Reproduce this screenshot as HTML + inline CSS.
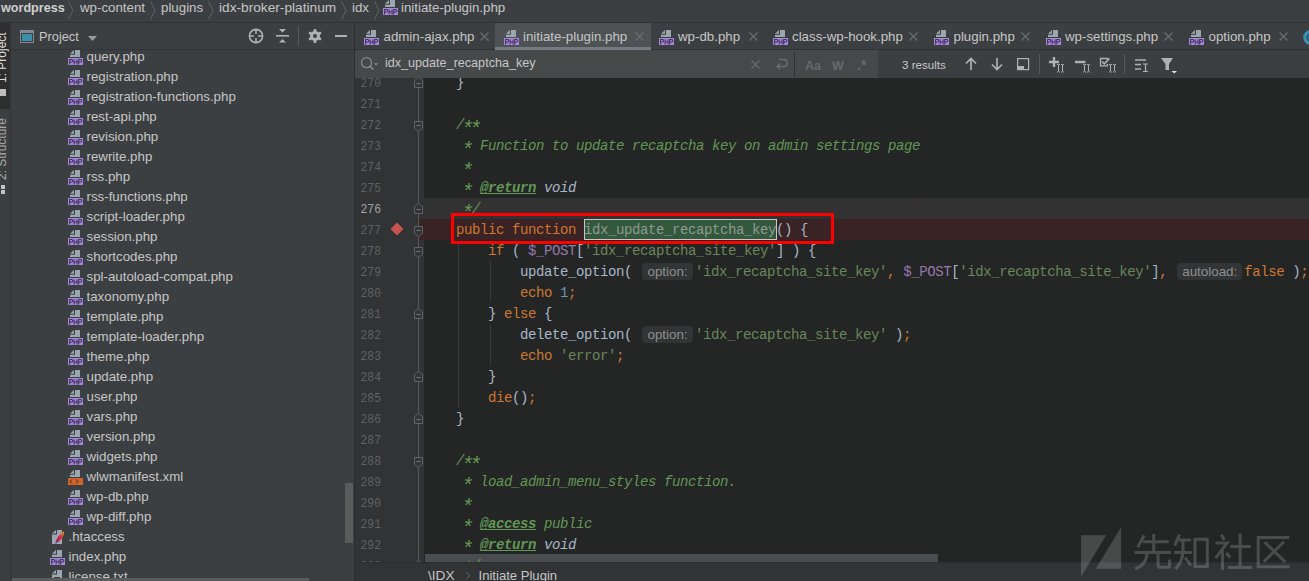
<!DOCTYPE html>
<html><head><meta charset="utf-8">
<style>
*{margin:0;padding:0;box-sizing:border-box}
html,body{width:1309px;height:581px;overflow:hidden;background:#3c3f41}
body{position:relative;font-family:"Liberation Sans",sans-serif}
.a{position:absolute;white-space:pre}
svg{position:absolute;overflow:visible}
.cl{position:absolute;left:0;white-space:pre;font-family:"Liberation Mono",monospace;font-size:14px;letter-spacing:-0.4px;line-height:21px;color:#a9b7c6}
.k{color:#cc7832}.s{color:#6a8759}.n{color:#6897bb}.v{color:#9876aa}.c{color:#629755;font-style:italic}
.tg{font-weight:bold;text-decoration:underline;text-decoration-skip-ink:none}
.ast{display:inline-block;width:8px;text-align:center;transform:translate(-1px,4.5px) scale(1.45)}
.vd{color:#a9b7c6;font-style:italic}
.hl{color:#909a90}
.hint{display:inline-block;position:relative;height:21px;vertical-align:top;font-family:"Liberation Sans",sans-serif;font-size:13.4px;letter-spacing:0px;color:#8f8f8f;line-height:21px;text-align:center}
.hb{position:absolute;left:2px;right:2px;top:1px;bottom:3px;background:#323435;border-radius:4px}
.ht{position:relative;top:-1px}
</style></head><body>
<div class="a" style="left:0px;top:0px;width:1309px;height:581px;background:#3c3f41;"></div>
<div class="a" style="left:0px;top:0px;width:1309px;height:22px;background:#3c3f41;"></div>
<div class="a" style="left:0px;top:22px;width:1309px;height:1px;background:#2f3133;"></div>
<div class="a" style="left:0px;top:23px;width:10px;height:86px;background:#2c2e30;"></div>
<div class="a" style="left:10px;top:23px;width:1px;height:558px;background:#323436;"></div>
<div class="a" style="left:11px;top:49px;width:343px;height:1px;background:#323436;"></div>
<div class="a" style="left:354px;top:23px;width:1px;height:558px;background:#2b2d2e;"></div>
<div class="a" style="left:1px;top:-1.87px;line-height:20px;font-size:12.6px;color:#cfcfcf;font-family:'Liberation Sans',sans-serif;font-weight:bold">wordpress</div>
<svg style="left:68px;top:1px" width="6" height="19"><path d="M0.5 0.5 L5 9.5 L0.5 18.5" fill="none" stroke="#5d6062" stroke-width="1"/></svg>
<div class="a" style="left:80px;top:-2.11px;line-height:20px;font-size:13.3px;color:#c6c6c6;font-family:'Liberation Sans',sans-serif;">wp-content</div>
<svg style="left:150px;top:1px" width="6" height="19"><path d="M0.5 0.5 L5 9.5 L0.5 18.5" fill="none" stroke="#5d6062" stroke-width="1"/></svg>
<div class="a" style="left:161px;top:-2.11px;line-height:20px;font-size:13.3px;color:#c6c6c6;font-family:'Liberation Sans',sans-serif;">plugins</div>
<svg style="left:208px;top:1px" width="6" height="19"><path d="M0.5 0.5 L5 9.5 L0.5 18.5" fill="none" stroke="#5d6062" stroke-width="1"/></svg>
<div class="a" style="left:219px;top:-2.25px;line-height:20px;font-size:13.7px;color:#c6c6c6;font-family:'Liberation Sans',sans-serif;">idx-broker-platinum</div>
<svg style="left:341px;top:1px" width="6" height="19"><path d="M0.5 0.5 L5 9.5 L0.5 18.5" fill="none" stroke="#5d6062" stroke-width="1"/></svg>
<div class="a" style="left:352px;top:-2.11px;line-height:20px;font-size:13.3px;color:#c6c6c6;font-family:'Liberation Sans',sans-serif;">idx</div>
<svg style="left:374px;top:1px" width="6" height="19"><path d="M0.5 0.5 L5 9.5 L0.5 18.5" fill="none" stroke="#5d6062" stroke-width="1"/></svg>
<svg style="left:383px;top:0px" width="15" height="15" viewBox="0 0 15 15">
<path d="M7 0 H12 V7 H2 V4.7 H7 Z" fill="#9aa7b0"/>
<path d="M2 3.7 L6 0 V3.7 Z" fill="#9aa7b0"/>
<rect x="0" y="8" width="15" height="7" fill="#a686d8"/>
<path d="M1.6 14.6 V9.4 H3.7 Q4.7 9.4 4.7 10.7 Q4.7 12 3.7 12 H1.6" fill="none" stroke="#40345a" stroke-width="1.05"/>
<path d="M6.1 9.4 V14.6 M9.1 9.4 V14.6 M6.1 12 H9.1" fill="none" stroke="#40345a" stroke-width="1.05"/>
<path d="M10.7 14.6 V9.4 H12.8 Q13.8 9.4 13.8 10.7 Q13.8 12 12.8 12 H10.7" fill="none" stroke="#40345a" stroke-width="1.05"/>
</svg>
<div class="a" style="left:401px;top:-2.11px;line-height:20px;font-size:13.3px;color:#c6c6c6;font-family:'Liberation Sans',sans-serif;">initiate-plugin.php</div>
<div class="a" style="left:-5px;top:31px;width:20px;height:52px;"><div style="position:absolute;left:0;top:0;width:52px;height:14px;transform-origin:0 0;transform:translate(0px,52px) rotate(-90deg);font-size:12px;line-height:14px;color:#dddddd;white-space:pre">1: Project</div></div>
<div class="a" style="left:0px;top:89px;width:6px;height:7px;background:#bdbdbd;"></div>
<div class="a" style="left:-5px;top:118px;width:20px;height:62px;"><div style="position:absolute;left:0;top:0;width:62px;height:14px;transform-origin:0 0;transform:translate(0px,62px) rotate(-90deg);font-size:12px;line-height:14px;color:#a8a8a8;white-space:pre">2: Structure</div></div>
<div class="a" style="left:1px;top:185px;width:4px;height:4px;background:#c4c4c4;"></div>
<div class="a" style="left:1px;top:190px;width:4px;height:4px;background:#c4c4c4;"></div>
<svg style="left:20px;top:30px" width="14" height="13"><rect x="0.5" y="0.5" width="13" height="12" fill="none" stroke="#7f8b91"/><rect x="0" y="0" width="14" height="3" fill="#7f8b91"/><rect x="2" y="4" width="10" height="7" fill="#3d8ead"/></svg>
<div class="a" style="left:39px;top:26.56px;line-height:20px;font-size:12.8px;color:#c6c6c6;font-family:'Liberation Sans',sans-serif;">Project</div>
<svg style="left:88px;top:35.5px" width="9" height="5"><path d="M0 0 H9 L4.5 5 Z" fill="#9a9c9e"/></svg>
<svg style="left:248px;top:28px" width="16" height="16"><circle cx="8" cy="8" r="6.6" fill="none" stroke="#afb1b3" stroke-width="1.6"/><path d="M8 1 V6 M8 10 V15 M1 8 H6 M10 8 H15" stroke="#afb1b3" stroke-width="1.6"/></svg>
<svg style="left:276px;top:29px" width="13" height="14"><path d="M3 0 H10 L6.5 3.5 Z M3 13.5 H10 L6.5 10 Z" fill="#afb1b3"/><rect x="0" y="6" width="13" height="1.6" fill="#afb1b3"/></svg>
<div class="a" style="left:298px;top:26px;width:1px;height:20px;background:#55585a;"></div>
<svg style="left:308px;top:29px" width="14" height="14" viewBox="0 0 14 14"><g fill="#afb1b3">
<circle cx="7" cy="7" r="5"/>
<rect x="5.6" y="0" width="2.8" height="14" rx="0.8"/>
<rect x="5.6" y="0" width="2.8" height="14" rx="0.8" transform="rotate(60 7 7)"/>
<rect x="5.6" y="0" width="2.8" height="14" rx="0.8" transform="rotate(120 7 7)"/>
</g><circle cx="7" cy="7" r="2" fill="#3c3f41"/></svg>
<div class="a" style="left:335px;top:35px;width:12px;height:2px;background:#afb1b3;"></div>
<div class="a" style="left:11px;top:50px;width:343px;height:531px;overflow:hidden">
<svg style="left:57px;top:0px" width="15" height="15" viewBox="0 0 15 15">
<path d="M7 0 H12 V7 H2 V4.7 H7 Z" fill="#9aa7b0"/>
<path d="M2 3.7 L6 0 V3.7 Z" fill="#9aa7b0"/>
<rect x="0" y="8" width="15" height="7" fill="#a686d8"/>
<path d="M1.6 14.6 V9.4 H3.7 Q4.7 9.4 4.7 10.7 Q4.7 12 3.7 12 H1.6" fill="none" stroke="#40345a" stroke-width="1.05"/>
<path d="M6.1 9.4 V14.6 M9.1 9.4 V14.6 M6.1 12 H9.1" fill="none" stroke="#40345a" stroke-width="1.05"/>
<path d="M10.7 14.6 V9.4 H12.8 Q13.8 9.4 13.8 10.7 Q13.8 12 12.8 12 H10.7" fill="none" stroke="#40345a" stroke-width="1.05"/>
</svg>
<div class="a" style="left:75.5px;top:-2.61px;line-height:20px;font-size:13.3px;color:#c6c6c6;font-family:'Liberation Sans',sans-serif;">query.php</div>
<svg style="left:57px;top:20px" width="15" height="15" viewBox="0 0 15 15">
<path d="M7 0 H12 V7 H2 V4.7 H7 Z" fill="#9aa7b0"/>
<path d="M2 3.7 L6 0 V3.7 Z" fill="#9aa7b0"/>
<rect x="0" y="8" width="15" height="7" fill="#a686d8"/>
<path d="M1.6 14.6 V9.4 H3.7 Q4.7 9.4 4.7 10.7 Q4.7 12 3.7 12 H1.6" fill="none" stroke="#40345a" stroke-width="1.05"/>
<path d="M6.1 9.4 V14.6 M9.1 9.4 V14.6 M6.1 12 H9.1" fill="none" stroke="#40345a" stroke-width="1.05"/>
<path d="M10.7 14.6 V9.4 H12.8 Q13.8 9.4 13.8 10.7 Q13.8 12 12.8 12 H10.7" fill="none" stroke="#40345a" stroke-width="1.05"/>
</svg>
<div class="a" style="left:75.5px;top:17.39px;line-height:20px;font-size:13.3px;color:#c6c6c6;font-family:'Liberation Sans',sans-serif;">registration.php</div>
<svg style="left:57px;top:40px" width="15" height="15" viewBox="0 0 15 15">
<path d="M7 0 H12 V7 H2 V4.7 H7 Z" fill="#9aa7b0"/>
<path d="M2 3.7 L6 0 V3.7 Z" fill="#9aa7b0"/>
<rect x="0" y="8" width="15" height="7" fill="#a686d8"/>
<path d="M1.6 14.6 V9.4 H3.7 Q4.7 9.4 4.7 10.7 Q4.7 12 3.7 12 H1.6" fill="none" stroke="#40345a" stroke-width="1.05"/>
<path d="M6.1 9.4 V14.6 M9.1 9.4 V14.6 M6.1 12 H9.1" fill="none" stroke="#40345a" stroke-width="1.05"/>
<path d="M10.7 14.6 V9.4 H12.8 Q13.8 9.4 13.8 10.7 Q13.8 12 12.8 12 H10.7" fill="none" stroke="#40345a" stroke-width="1.05"/>
</svg>
<div class="a" style="left:75.5px;top:37.39px;line-height:20px;font-size:13.3px;color:#c6c6c6;font-family:'Liberation Sans',sans-serif;">registration-functions.php</div>
<svg style="left:57px;top:60px" width="15" height="15" viewBox="0 0 15 15">
<path d="M7 0 H12 V7 H2 V4.7 H7 Z" fill="#9aa7b0"/>
<path d="M2 3.7 L6 0 V3.7 Z" fill="#9aa7b0"/>
<rect x="0" y="8" width="15" height="7" fill="#a686d8"/>
<path d="M1.6 14.6 V9.4 H3.7 Q4.7 9.4 4.7 10.7 Q4.7 12 3.7 12 H1.6" fill="none" stroke="#40345a" stroke-width="1.05"/>
<path d="M6.1 9.4 V14.6 M9.1 9.4 V14.6 M6.1 12 H9.1" fill="none" stroke="#40345a" stroke-width="1.05"/>
<path d="M10.7 14.6 V9.4 H12.8 Q13.8 9.4 13.8 10.7 Q13.8 12 12.8 12 H10.7" fill="none" stroke="#40345a" stroke-width="1.05"/>
</svg>
<div class="a" style="left:75.5px;top:57.39px;line-height:20px;font-size:13.3px;color:#c6c6c6;font-family:'Liberation Sans',sans-serif;">rest-api.php</div>
<svg style="left:57px;top:80px" width="15" height="15" viewBox="0 0 15 15">
<path d="M7 0 H12 V7 H2 V4.7 H7 Z" fill="#9aa7b0"/>
<path d="M2 3.7 L6 0 V3.7 Z" fill="#9aa7b0"/>
<rect x="0" y="8" width="15" height="7" fill="#a686d8"/>
<path d="M1.6 14.6 V9.4 H3.7 Q4.7 9.4 4.7 10.7 Q4.7 12 3.7 12 H1.6" fill="none" stroke="#40345a" stroke-width="1.05"/>
<path d="M6.1 9.4 V14.6 M9.1 9.4 V14.6 M6.1 12 H9.1" fill="none" stroke="#40345a" stroke-width="1.05"/>
<path d="M10.7 14.6 V9.4 H12.8 Q13.8 9.4 13.8 10.7 Q13.8 12 12.8 12 H10.7" fill="none" stroke="#40345a" stroke-width="1.05"/>
</svg>
<div class="a" style="left:75.5px;top:77.39px;line-height:20px;font-size:13.3px;color:#c6c6c6;font-family:'Liberation Sans',sans-serif;">revision.php</div>
<svg style="left:57px;top:100px" width="15" height="15" viewBox="0 0 15 15">
<path d="M7 0 H12 V7 H2 V4.7 H7 Z" fill="#9aa7b0"/>
<path d="M2 3.7 L6 0 V3.7 Z" fill="#9aa7b0"/>
<rect x="0" y="8" width="15" height="7" fill="#a686d8"/>
<path d="M1.6 14.6 V9.4 H3.7 Q4.7 9.4 4.7 10.7 Q4.7 12 3.7 12 H1.6" fill="none" stroke="#40345a" stroke-width="1.05"/>
<path d="M6.1 9.4 V14.6 M9.1 9.4 V14.6 M6.1 12 H9.1" fill="none" stroke="#40345a" stroke-width="1.05"/>
<path d="M10.7 14.6 V9.4 H12.8 Q13.8 9.4 13.8 10.7 Q13.8 12 12.8 12 H10.7" fill="none" stroke="#40345a" stroke-width="1.05"/>
</svg>
<div class="a" style="left:75.5px;top:97.39px;line-height:20px;font-size:13.3px;color:#c6c6c6;font-family:'Liberation Sans',sans-serif;">rewrite.php</div>
<svg style="left:57px;top:120px" width="15" height="15" viewBox="0 0 15 15">
<path d="M7 0 H12 V7 H2 V4.7 H7 Z" fill="#9aa7b0"/>
<path d="M2 3.7 L6 0 V3.7 Z" fill="#9aa7b0"/>
<rect x="0" y="8" width="15" height="7" fill="#a686d8"/>
<path d="M1.6 14.6 V9.4 H3.7 Q4.7 9.4 4.7 10.7 Q4.7 12 3.7 12 H1.6" fill="none" stroke="#40345a" stroke-width="1.05"/>
<path d="M6.1 9.4 V14.6 M9.1 9.4 V14.6 M6.1 12 H9.1" fill="none" stroke="#40345a" stroke-width="1.05"/>
<path d="M10.7 14.6 V9.4 H12.8 Q13.8 9.4 13.8 10.7 Q13.8 12 12.8 12 H10.7" fill="none" stroke="#40345a" stroke-width="1.05"/>
</svg>
<div class="a" style="left:75.5px;top:117.39px;line-height:20px;font-size:13.3px;color:#c6c6c6;font-family:'Liberation Sans',sans-serif;">rss.php</div>
<svg style="left:57px;top:140px" width="15" height="15" viewBox="0 0 15 15">
<path d="M7 0 H12 V7 H2 V4.7 H7 Z" fill="#9aa7b0"/>
<path d="M2 3.7 L6 0 V3.7 Z" fill="#9aa7b0"/>
<rect x="0" y="8" width="15" height="7" fill="#a686d8"/>
<path d="M1.6 14.6 V9.4 H3.7 Q4.7 9.4 4.7 10.7 Q4.7 12 3.7 12 H1.6" fill="none" stroke="#40345a" stroke-width="1.05"/>
<path d="M6.1 9.4 V14.6 M9.1 9.4 V14.6 M6.1 12 H9.1" fill="none" stroke="#40345a" stroke-width="1.05"/>
<path d="M10.7 14.6 V9.4 H12.8 Q13.8 9.4 13.8 10.7 Q13.8 12 12.8 12 H10.7" fill="none" stroke="#40345a" stroke-width="1.05"/>
</svg>
<div class="a" style="left:75.5px;top:137.39px;line-height:20px;font-size:13.3px;color:#c6c6c6;font-family:'Liberation Sans',sans-serif;">rss-functions.php</div>
<svg style="left:57px;top:160px" width="15" height="15" viewBox="0 0 15 15">
<path d="M7 0 H12 V7 H2 V4.7 H7 Z" fill="#9aa7b0"/>
<path d="M2 3.7 L6 0 V3.7 Z" fill="#9aa7b0"/>
<rect x="0" y="8" width="15" height="7" fill="#a686d8"/>
<path d="M1.6 14.6 V9.4 H3.7 Q4.7 9.4 4.7 10.7 Q4.7 12 3.7 12 H1.6" fill="none" stroke="#40345a" stroke-width="1.05"/>
<path d="M6.1 9.4 V14.6 M9.1 9.4 V14.6 M6.1 12 H9.1" fill="none" stroke="#40345a" stroke-width="1.05"/>
<path d="M10.7 14.6 V9.4 H12.8 Q13.8 9.4 13.8 10.7 Q13.8 12 12.8 12 H10.7" fill="none" stroke="#40345a" stroke-width="1.05"/>
</svg>
<div class="a" style="left:75.5px;top:157.39px;line-height:20px;font-size:13.3px;color:#c6c6c6;font-family:'Liberation Sans',sans-serif;">script-loader.php</div>
<svg style="left:57px;top:180px" width="15" height="15" viewBox="0 0 15 15">
<path d="M7 0 H12 V7 H2 V4.7 H7 Z" fill="#9aa7b0"/>
<path d="M2 3.7 L6 0 V3.7 Z" fill="#9aa7b0"/>
<rect x="0" y="8" width="15" height="7" fill="#a686d8"/>
<path d="M1.6 14.6 V9.4 H3.7 Q4.7 9.4 4.7 10.7 Q4.7 12 3.7 12 H1.6" fill="none" stroke="#40345a" stroke-width="1.05"/>
<path d="M6.1 9.4 V14.6 M9.1 9.4 V14.6 M6.1 12 H9.1" fill="none" stroke="#40345a" stroke-width="1.05"/>
<path d="M10.7 14.6 V9.4 H12.8 Q13.8 9.4 13.8 10.7 Q13.8 12 12.8 12 H10.7" fill="none" stroke="#40345a" stroke-width="1.05"/>
</svg>
<div class="a" style="left:75.5px;top:177.39px;line-height:20px;font-size:13.3px;color:#c6c6c6;font-family:'Liberation Sans',sans-serif;">session.php</div>
<svg style="left:57px;top:200px" width="15" height="15" viewBox="0 0 15 15">
<path d="M7 0 H12 V7 H2 V4.7 H7 Z" fill="#9aa7b0"/>
<path d="M2 3.7 L6 0 V3.7 Z" fill="#9aa7b0"/>
<rect x="0" y="8" width="15" height="7" fill="#a686d8"/>
<path d="M1.6 14.6 V9.4 H3.7 Q4.7 9.4 4.7 10.7 Q4.7 12 3.7 12 H1.6" fill="none" stroke="#40345a" stroke-width="1.05"/>
<path d="M6.1 9.4 V14.6 M9.1 9.4 V14.6 M6.1 12 H9.1" fill="none" stroke="#40345a" stroke-width="1.05"/>
<path d="M10.7 14.6 V9.4 H12.8 Q13.8 9.4 13.8 10.7 Q13.8 12 12.8 12 H10.7" fill="none" stroke="#40345a" stroke-width="1.05"/>
</svg>
<div class="a" style="left:75.5px;top:197.39px;line-height:20px;font-size:13.3px;color:#c6c6c6;font-family:'Liberation Sans',sans-serif;">shortcodes.php</div>
<svg style="left:57px;top:220px" width="15" height="15" viewBox="0 0 15 15">
<path d="M7 0 H12 V7 H2 V4.7 H7 Z" fill="#9aa7b0"/>
<path d="M2 3.7 L6 0 V3.7 Z" fill="#9aa7b0"/>
<rect x="0" y="8" width="15" height="7" fill="#a686d8"/>
<path d="M1.6 14.6 V9.4 H3.7 Q4.7 9.4 4.7 10.7 Q4.7 12 3.7 12 H1.6" fill="none" stroke="#40345a" stroke-width="1.05"/>
<path d="M6.1 9.4 V14.6 M9.1 9.4 V14.6 M6.1 12 H9.1" fill="none" stroke="#40345a" stroke-width="1.05"/>
<path d="M10.7 14.6 V9.4 H12.8 Q13.8 9.4 13.8 10.7 Q13.8 12 12.8 12 H10.7" fill="none" stroke="#40345a" stroke-width="1.05"/>
</svg>
<div class="a" style="left:75.5px;top:217.39px;line-height:20px;font-size:13.3px;color:#c6c6c6;font-family:'Liberation Sans',sans-serif;">spl-autoload-compat.php</div>
<svg style="left:57px;top:240px" width="15" height="15" viewBox="0 0 15 15">
<path d="M7 0 H12 V7 H2 V4.7 H7 Z" fill="#9aa7b0"/>
<path d="M2 3.7 L6 0 V3.7 Z" fill="#9aa7b0"/>
<rect x="0" y="8" width="15" height="7" fill="#a686d8"/>
<path d="M1.6 14.6 V9.4 H3.7 Q4.7 9.4 4.7 10.7 Q4.7 12 3.7 12 H1.6" fill="none" stroke="#40345a" stroke-width="1.05"/>
<path d="M6.1 9.4 V14.6 M9.1 9.4 V14.6 M6.1 12 H9.1" fill="none" stroke="#40345a" stroke-width="1.05"/>
<path d="M10.7 14.6 V9.4 H12.8 Q13.8 9.4 13.8 10.7 Q13.8 12 12.8 12 H10.7" fill="none" stroke="#40345a" stroke-width="1.05"/>
</svg>
<div class="a" style="left:75.5px;top:237.39px;line-height:20px;font-size:13.3px;color:#c6c6c6;font-family:'Liberation Sans',sans-serif;">taxonomy.php</div>
<svg style="left:57px;top:260px" width="15" height="15" viewBox="0 0 15 15">
<path d="M7 0 H12 V7 H2 V4.7 H7 Z" fill="#9aa7b0"/>
<path d="M2 3.7 L6 0 V3.7 Z" fill="#9aa7b0"/>
<rect x="0" y="8" width="15" height="7" fill="#a686d8"/>
<path d="M1.6 14.6 V9.4 H3.7 Q4.7 9.4 4.7 10.7 Q4.7 12 3.7 12 H1.6" fill="none" stroke="#40345a" stroke-width="1.05"/>
<path d="M6.1 9.4 V14.6 M9.1 9.4 V14.6 M6.1 12 H9.1" fill="none" stroke="#40345a" stroke-width="1.05"/>
<path d="M10.7 14.6 V9.4 H12.8 Q13.8 9.4 13.8 10.7 Q13.8 12 12.8 12 H10.7" fill="none" stroke="#40345a" stroke-width="1.05"/>
</svg>
<div class="a" style="left:75.5px;top:257.39px;line-height:20px;font-size:13.3px;color:#c6c6c6;font-family:'Liberation Sans',sans-serif;">template.php</div>
<svg style="left:57px;top:280px" width="15" height="15" viewBox="0 0 15 15">
<path d="M7 0 H12 V7 H2 V4.7 H7 Z" fill="#9aa7b0"/>
<path d="M2 3.7 L6 0 V3.7 Z" fill="#9aa7b0"/>
<rect x="0" y="8" width="15" height="7" fill="#a686d8"/>
<path d="M1.6 14.6 V9.4 H3.7 Q4.7 9.4 4.7 10.7 Q4.7 12 3.7 12 H1.6" fill="none" stroke="#40345a" stroke-width="1.05"/>
<path d="M6.1 9.4 V14.6 M9.1 9.4 V14.6 M6.1 12 H9.1" fill="none" stroke="#40345a" stroke-width="1.05"/>
<path d="M10.7 14.6 V9.4 H12.8 Q13.8 9.4 13.8 10.7 Q13.8 12 12.8 12 H10.7" fill="none" stroke="#40345a" stroke-width="1.05"/>
</svg>
<div class="a" style="left:75.5px;top:277.39px;line-height:20px;font-size:13.3px;color:#c6c6c6;font-family:'Liberation Sans',sans-serif;">template-loader.php</div>
<svg style="left:57px;top:300px" width="15" height="15" viewBox="0 0 15 15">
<path d="M7 0 H12 V7 H2 V4.7 H7 Z" fill="#9aa7b0"/>
<path d="M2 3.7 L6 0 V3.7 Z" fill="#9aa7b0"/>
<rect x="0" y="8" width="15" height="7" fill="#a686d8"/>
<path d="M1.6 14.6 V9.4 H3.7 Q4.7 9.4 4.7 10.7 Q4.7 12 3.7 12 H1.6" fill="none" stroke="#40345a" stroke-width="1.05"/>
<path d="M6.1 9.4 V14.6 M9.1 9.4 V14.6 M6.1 12 H9.1" fill="none" stroke="#40345a" stroke-width="1.05"/>
<path d="M10.7 14.6 V9.4 H12.8 Q13.8 9.4 13.8 10.7 Q13.8 12 12.8 12 H10.7" fill="none" stroke="#40345a" stroke-width="1.05"/>
</svg>
<div class="a" style="left:75.5px;top:297.39px;line-height:20px;font-size:13.3px;color:#c6c6c6;font-family:'Liberation Sans',sans-serif;">theme.php</div>
<svg style="left:57px;top:320px" width="15" height="15" viewBox="0 0 15 15">
<path d="M7 0 H12 V7 H2 V4.7 H7 Z" fill="#9aa7b0"/>
<path d="M2 3.7 L6 0 V3.7 Z" fill="#9aa7b0"/>
<rect x="0" y="8" width="15" height="7" fill="#a686d8"/>
<path d="M1.6 14.6 V9.4 H3.7 Q4.7 9.4 4.7 10.7 Q4.7 12 3.7 12 H1.6" fill="none" stroke="#40345a" stroke-width="1.05"/>
<path d="M6.1 9.4 V14.6 M9.1 9.4 V14.6 M6.1 12 H9.1" fill="none" stroke="#40345a" stroke-width="1.05"/>
<path d="M10.7 14.6 V9.4 H12.8 Q13.8 9.4 13.8 10.7 Q13.8 12 12.8 12 H10.7" fill="none" stroke="#40345a" stroke-width="1.05"/>
</svg>
<div class="a" style="left:75.5px;top:317.39px;line-height:20px;font-size:13.3px;color:#c6c6c6;font-family:'Liberation Sans',sans-serif;">update.php</div>
<svg style="left:57px;top:340px" width="15" height="15" viewBox="0 0 15 15">
<path d="M7 0 H12 V7 H2 V4.7 H7 Z" fill="#9aa7b0"/>
<path d="M2 3.7 L6 0 V3.7 Z" fill="#9aa7b0"/>
<rect x="0" y="8" width="15" height="7" fill="#a686d8"/>
<path d="M1.6 14.6 V9.4 H3.7 Q4.7 9.4 4.7 10.7 Q4.7 12 3.7 12 H1.6" fill="none" stroke="#40345a" stroke-width="1.05"/>
<path d="M6.1 9.4 V14.6 M9.1 9.4 V14.6 M6.1 12 H9.1" fill="none" stroke="#40345a" stroke-width="1.05"/>
<path d="M10.7 14.6 V9.4 H12.8 Q13.8 9.4 13.8 10.7 Q13.8 12 12.8 12 H10.7" fill="none" stroke="#40345a" stroke-width="1.05"/>
</svg>
<div class="a" style="left:75.5px;top:337.39px;line-height:20px;font-size:13.3px;color:#c6c6c6;font-family:'Liberation Sans',sans-serif;">user.php</div>
<svg style="left:57px;top:360px" width="15" height="15" viewBox="0 0 15 15">
<path d="M7 0 H12 V7 H2 V4.7 H7 Z" fill="#9aa7b0"/>
<path d="M2 3.7 L6 0 V3.7 Z" fill="#9aa7b0"/>
<rect x="0" y="8" width="15" height="7" fill="#a686d8"/>
<path d="M1.6 14.6 V9.4 H3.7 Q4.7 9.4 4.7 10.7 Q4.7 12 3.7 12 H1.6" fill="none" stroke="#40345a" stroke-width="1.05"/>
<path d="M6.1 9.4 V14.6 M9.1 9.4 V14.6 M6.1 12 H9.1" fill="none" stroke="#40345a" stroke-width="1.05"/>
<path d="M10.7 14.6 V9.4 H12.8 Q13.8 9.4 13.8 10.7 Q13.8 12 12.8 12 H10.7" fill="none" stroke="#40345a" stroke-width="1.05"/>
</svg>
<div class="a" style="left:75.5px;top:357.39px;line-height:20px;font-size:13.3px;color:#c6c6c6;font-family:'Liberation Sans',sans-serif;">vars.php</div>
<svg style="left:57px;top:380px" width="15" height="15" viewBox="0 0 15 15">
<path d="M7 0 H12 V7 H2 V4.7 H7 Z" fill="#9aa7b0"/>
<path d="M2 3.7 L6 0 V3.7 Z" fill="#9aa7b0"/>
<rect x="0" y="8" width="15" height="7" fill="#a686d8"/>
<path d="M1.6 14.6 V9.4 H3.7 Q4.7 9.4 4.7 10.7 Q4.7 12 3.7 12 H1.6" fill="none" stroke="#40345a" stroke-width="1.05"/>
<path d="M6.1 9.4 V14.6 M9.1 9.4 V14.6 M6.1 12 H9.1" fill="none" stroke="#40345a" stroke-width="1.05"/>
<path d="M10.7 14.6 V9.4 H12.8 Q13.8 9.4 13.8 10.7 Q13.8 12 12.8 12 H10.7" fill="none" stroke="#40345a" stroke-width="1.05"/>
</svg>
<div class="a" style="left:75.5px;top:377.39px;line-height:20px;font-size:13.3px;color:#c6c6c6;font-family:'Liberation Sans',sans-serif;">version.php</div>
<svg style="left:57px;top:400px" width="15" height="15" viewBox="0 0 15 15">
<path d="M7 0 H12 V7 H2 V4.7 H7 Z" fill="#9aa7b0"/>
<path d="M2 3.7 L6 0 V3.7 Z" fill="#9aa7b0"/>
<rect x="0" y="8" width="15" height="7" fill="#a686d8"/>
<path d="M1.6 14.6 V9.4 H3.7 Q4.7 9.4 4.7 10.7 Q4.7 12 3.7 12 H1.6" fill="none" stroke="#40345a" stroke-width="1.05"/>
<path d="M6.1 9.4 V14.6 M9.1 9.4 V14.6 M6.1 12 H9.1" fill="none" stroke="#40345a" stroke-width="1.05"/>
<path d="M10.7 14.6 V9.4 H12.8 Q13.8 9.4 13.8 10.7 Q13.8 12 12.8 12 H10.7" fill="none" stroke="#40345a" stroke-width="1.05"/>
</svg>
<div class="a" style="left:75.5px;top:397.39px;line-height:20px;font-size:13.3px;color:#c6c6c6;font-family:'Liberation Sans',sans-serif;">widgets.php</div>
<svg style="left:57px;top:420px" width="15" height="15" viewBox="0 0 15 15"><path d="M7 0 H12 V7 H2 V4.7 H7 Z" fill="#9aa7b0"/><path d="M2 3.7 L6 0 V3.7 Z" fill="#9aa7b0"/><rect x="0" y="8" width="15" height="7" fill="#d0632a"/><path d="M4 9.5 L2 11.5 L4 13.5 M8 9.5 L10 11.5 L8 13.5" fill="none" stroke="#3a2418" stroke-width="1"/></svg>
<div class="a" style="left:75.5px;top:417.39px;line-height:20px;font-size:13.3px;color:#c6c6c6;font-family:'Liberation Sans',sans-serif;">wlwmanifest.xml</div>
<svg style="left:57px;top:440px" width="15" height="15" viewBox="0 0 15 15">
<path d="M7 0 H12 V7 H2 V4.7 H7 Z" fill="#9aa7b0"/>
<path d="M2 3.7 L6 0 V3.7 Z" fill="#9aa7b0"/>
<rect x="0" y="8" width="15" height="7" fill="#a686d8"/>
<path d="M1.6 14.6 V9.4 H3.7 Q4.7 9.4 4.7 10.7 Q4.7 12 3.7 12 H1.6" fill="none" stroke="#40345a" stroke-width="1.05"/>
<path d="M6.1 9.4 V14.6 M9.1 9.4 V14.6 M6.1 12 H9.1" fill="none" stroke="#40345a" stroke-width="1.05"/>
<path d="M10.7 14.6 V9.4 H12.8 Q13.8 9.4 13.8 10.7 Q13.8 12 12.8 12 H10.7" fill="none" stroke="#40345a" stroke-width="1.05"/>
</svg>
<div class="a" style="left:75.5px;top:437.39px;line-height:20px;font-size:13.3px;color:#c6c6c6;font-family:'Liberation Sans',sans-serif;">wp-db.php</div>
<svg style="left:57px;top:460px" width="15" height="15" viewBox="0 0 15 15">
<path d="M7 0 H12 V7 H2 V4.7 H7 Z" fill="#9aa7b0"/>
<path d="M2 3.7 L6 0 V3.7 Z" fill="#9aa7b0"/>
<rect x="0" y="8" width="15" height="7" fill="#a686d8"/>
<path d="M1.6 14.6 V9.4 H3.7 Q4.7 9.4 4.7 10.7 Q4.7 12 3.7 12 H1.6" fill="none" stroke="#40345a" stroke-width="1.05"/>
<path d="M6.1 9.4 V14.6 M9.1 9.4 V14.6 M6.1 12 H9.1" fill="none" stroke="#40345a" stroke-width="1.05"/>
<path d="M10.7 14.6 V9.4 H12.8 Q13.8 9.4 13.8 10.7 Q13.8 12 12.8 12 H10.7" fill="none" stroke="#40345a" stroke-width="1.05"/>
</svg>
<div class="a" style="left:75.5px;top:457.39px;line-height:20px;font-size:13.3px;color:#c6c6c6;font-family:'Liberation Sans',sans-serif;">wp-diff.php</div>
<svg style="left:41px;top:480px" width="15" height="15" viewBox="0 0 15 15"><defs><linearGradient id="fg" x1="1" y1="0" x2="0" y2="1"><stop offset="0" stop-color="#f7a52c"/><stop offset="0.45" stop-color="#d8263e"/><stop offset="1" stop-color="#7a2a7e"/></linearGradient></defs><path d="M5 0 H10 V14 H0 V4.5 H5 Z" fill="#9aa7b0"/><path d="M0 3.5 L4 0 V3.5 Z" fill="#9aa7b0"/><path d="M3.2 14 Q4 6.5 12 1.2 Q12.5 8.5 3.2 14 Z" fill="url(#fg)"/></svg>
<div class="a" style="left:57.5px;top:477.39px;line-height:20px;font-size:13.3px;color:#c6c6c6;font-family:'Liberation Sans',sans-serif;">.htaccess</div>
<svg style="left:39px;top:500px" width="15" height="15" viewBox="0 0 15 15">
<path d="M7 0 H12 V7 H2 V4.7 H7 Z" fill="#9aa7b0"/>
<path d="M2 3.7 L6 0 V3.7 Z" fill="#9aa7b0"/>
<rect x="0" y="8" width="15" height="7" fill="#a686d8"/>
<path d="M1.6 14.6 V9.4 H3.7 Q4.7 9.4 4.7 10.7 Q4.7 12 3.7 12 H1.6" fill="none" stroke="#40345a" stroke-width="1.05"/>
<path d="M6.1 9.4 V14.6 M9.1 9.4 V14.6 M6.1 12 H9.1" fill="none" stroke="#40345a" stroke-width="1.05"/>
<path d="M10.7 14.6 V9.4 H12.8 Q13.8 9.4 13.8 10.7 Q13.8 12 12.8 12 H10.7" fill="none" stroke="#40345a" stroke-width="1.05"/>
</svg>
<div class="a" style="left:57.5px;top:497.39px;line-height:20px;font-size:13.3px;color:#c6c6c6;font-family:'Liberation Sans',sans-serif;">index.php</div>
<svg style="left:41px;top:520px" width="15" height="15" viewBox="0 0 15 15"><path d="M5 0 H10 V15 H0 V4.5 H5 Z" fill="#9aa7b0"/><path d="M0 3.5 L4 0 V3.5 Z" fill="#9aa7b0"/><path d="M2 7.5 H8 M2 10.5 H8 M2 13.5 H8" stroke="#3c3f41"/></svg>
<div class="a" style="left:57.5px;top:517.39px;line-height:20px;font-size:13.3px;color:#c6c6c6;font-family:'Liberation Sans',sans-serif;">license.txt</div>
</div>
<div class="a" style="left:345px;top:483px;width:8px;height:60px;background:#595b5d;"></div>
<div class="a" style="left:12px;top:578px;width:297px;height:3px;background:#5a5c5e;"></div>
<div class="a" style="left:354px;top:49px;width:955px;height:1px;background:#323232;"></div>
<div class="a" style="left:495px;top:23px;width:156px;height:24px;background:#4e5254;"></div>
<div class="a" style="left:495px;top:47px;width:156px;height:3px;background:#747a80;"></div>
<svg style="left:364px;top:30px" width="15" height="15" viewBox="0 0 15 15">
<path d="M7 0 H12 V7 H2 V4.7 H7 Z" fill="#9aa7b0"/>
<path d="M2 3.7 L6 0 V3.7 Z" fill="#9aa7b0"/>
<rect x="0" y="8" width="15" height="7" fill="#a686d8"/>
<path d="M1.6 14.6 V9.4 H3.7 Q4.7 9.4 4.7 10.7 Q4.7 12 3.7 12 H1.6" fill="none" stroke="#40345a" stroke-width="1.05"/>
<path d="M6.1 9.4 V14.6 M9.1 9.4 V14.6 M6.1 12 H9.1" fill="none" stroke="#40345a" stroke-width="1.05"/>
<path d="M10.7 14.6 V9.4 H12.8 Q13.8 9.4 13.8 10.7 Q13.8 12 12.8 12 H10.7" fill="none" stroke="#40345a" stroke-width="1.05"/>
</svg>
<div class="a" style="left:383.5px;top:27.39px;line-height:20px;font-size:13.3px;color:#c6c6c6;font-family:'Liberation Sans',sans-serif;">admin-ajax.php</div>
<svg style="left:479.5px;top:32px" width="9" height="9"><path d="M0.5 0.5 L8.5 8.5 M8.5 0.5 L0.5 8.5" stroke="#6c6f71" stroke-width="1.1"/></svg>
<svg style="left:504px;top:30px" width="15" height="15" viewBox="0 0 15 15">
<path d="M7 0 H12 V7 H2 V4.7 H7 Z" fill="#9aa7b0"/>
<path d="M2 3.7 L6 0 V3.7 Z" fill="#9aa7b0"/>
<rect x="0" y="8" width="15" height="7" fill="#a686d8"/>
<path d="M1.6 14.6 V9.4 H3.7 Q4.7 9.4 4.7 10.7 Q4.7 12 3.7 12 H1.6" fill="none" stroke="#40345a" stroke-width="1.05"/>
<path d="M6.1 9.4 V14.6 M9.1 9.4 V14.6 M6.1 12 H9.1" fill="none" stroke="#40345a" stroke-width="1.05"/>
<path d="M10.7 14.6 V9.4 H12.8 Q13.8 9.4 13.8 10.7 Q13.8 12 12.8 12 H10.7" fill="none" stroke="#40345a" stroke-width="1.05"/>
</svg>
<div class="a" style="left:523px;top:27.39px;line-height:20px;font-size:13.3px;color:#c6c6c6;font-family:'Liberation Sans',sans-serif;">initiate-plugin.php</div>
<svg style="left:634.5px;top:32px" width="9" height="9"><path d="M0.5 0.5 L8.5 8.5 M8.5 0.5 L0.5 8.5" stroke="#6c6f71" stroke-width="1.1"/></svg>
<svg style="left:659px;top:30px" width="15" height="15" viewBox="0 0 15 15">
<path d="M7 0 H12 V7 H2 V4.7 H7 Z" fill="#9aa7b0"/>
<path d="M2 3.7 L6 0 V3.7 Z" fill="#9aa7b0"/>
<rect x="0" y="8" width="15" height="7" fill="#a686d8"/>
<path d="M1.6 14.6 V9.4 H3.7 Q4.7 9.4 4.7 10.7 Q4.7 12 3.7 12 H1.6" fill="none" stroke="#40345a" stroke-width="1.05"/>
<path d="M6.1 9.4 V14.6 M9.1 9.4 V14.6 M6.1 12 H9.1" fill="none" stroke="#40345a" stroke-width="1.05"/>
<path d="M10.7 14.6 V9.4 H12.8 Q13.8 9.4 13.8 10.7 Q13.8 12 12.8 12 H10.7" fill="none" stroke="#40345a" stroke-width="1.05"/>
</svg>
<div class="a" style="left:678px;top:27.39px;line-height:20px;font-size:13.3px;color:#c6c6c6;font-family:'Liberation Sans',sans-serif;">wp-db.php</div>
<svg style="left:748.5px;top:32px" width="9" height="9"><path d="M0.5 0.5 L8.5 8.5 M8.5 0.5 L0.5 8.5" stroke="#6c6f71" stroke-width="1.1"/></svg>
<svg style="left:773px;top:30px" width="15" height="15" viewBox="0 0 15 15">
<path d="M7 0 H12 V7 H2 V4.7 H7 Z" fill="#9aa7b0"/>
<path d="M2 3.7 L6 0 V3.7 Z" fill="#9aa7b0"/>
<rect x="0" y="8" width="15" height="7" fill="#a686d8"/>
<path d="M1.6 14.6 V9.4 H3.7 Q4.7 9.4 4.7 10.7 Q4.7 12 3.7 12 H1.6" fill="none" stroke="#40345a" stroke-width="1.05"/>
<path d="M6.1 9.4 V14.6 M9.1 9.4 V14.6 M6.1 12 H9.1" fill="none" stroke="#40345a" stroke-width="1.05"/>
<path d="M10.7 14.6 V9.4 H12.8 Q13.8 9.4 13.8 10.7 Q13.8 12 12.8 12 H10.7" fill="none" stroke="#40345a" stroke-width="1.05"/>
</svg>
<div class="a" style="left:792px;top:27.39px;line-height:20px;font-size:13.3px;color:#c6c6c6;font-family:'Liberation Sans',sans-serif;">class-wp-hook.php</div>
<svg style="left:909.0px;top:32px" width="9" height="9"><path d="M0.5 0.5 L8.5 8.5 M8.5 0.5 L0.5 8.5" stroke="#6c6f71" stroke-width="1.1"/></svg>
<svg style="left:934px;top:30px" width="15" height="15" viewBox="0 0 15 15">
<path d="M7 0 H12 V7 H2 V4.7 H7 Z" fill="#9aa7b0"/>
<path d="M2 3.7 L6 0 V3.7 Z" fill="#9aa7b0"/>
<rect x="0" y="8" width="15" height="7" fill="#a686d8"/>
<path d="M1.6 14.6 V9.4 H3.7 Q4.7 9.4 4.7 10.7 Q4.7 12 3.7 12 H1.6" fill="none" stroke="#40345a" stroke-width="1.05"/>
<path d="M6.1 9.4 V14.6 M9.1 9.4 V14.6 M6.1 12 H9.1" fill="none" stroke="#40345a" stroke-width="1.05"/>
<path d="M10.7 14.6 V9.4 H12.8 Q13.8 9.4 13.8 10.7 Q13.8 12 12.8 12 H10.7" fill="none" stroke="#40345a" stroke-width="1.05"/>
</svg>
<div class="a" style="left:953.5px;top:27.39px;line-height:20px;font-size:13.3px;color:#c6c6c6;font-family:'Liberation Sans',sans-serif;">plugin.php</div>
<svg style="left:1021.0px;top:32px" width="9" height="9"><path d="M0.5 0.5 L8.5 8.5 M8.5 0.5 L0.5 8.5" stroke="#6c6f71" stroke-width="1.1"/></svg>
<svg style="left:1046px;top:30px" width="15" height="15" viewBox="0 0 15 15">
<path d="M7 0 H12 V7 H2 V4.7 H7 Z" fill="#9aa7b0"/>
<path d="M2 3.7 L6 0 V3.7 Z" fill="#9aa7b0"/>
<rect x="0" y="8" width="15" height="7" fill="#a686d8"/>
<path d="M1.6 14.6 V9.4 H3.7 Q4.7 9.4 4.7 10.7 Q4.7 12 3.7 12 H1.6" fill="none" stroke="#40345a" stroke-width="1.05"/>
<path d="M6.1 9.4 V14.6 M9.1 9.4 V14.6 M6.1 12 H9.1" fill="none" stroke="#40345a" stroke-width="1.05"/>
<path d="M10.7 14.6 V9.4 H12.8 Q13.8 9.4 13.8 10.7 Q13.8 12 12.8 12 H10.7" fill="none" stroke="#40345a" stroke-width="1.05"/>
</svg>
<div class="a" style="left:1065px;top:27.39px;line-height:20px;font-size:13.3px;color:#c6c6c6;font-family:'Liberation Sans',sans-serif;">wp-settings.php</div>
<svg style="left:1164.0px;top:32px" width="9" height="9"><path d="M0.5 0.5 L8.5 8.5 M8.5 0.5 L0.5 8.5" stroke="#6c6f71" stroke-width="1.1"/></svg>
<svg style="left:1189px;top:30px" width="15" height="15" viewBox="0 0 15 15">
<path d="M7 0 H12 V7 H2 V4.7 H7 Z" fill="#9aa7b0"/>
<path d="M2 3.7 L6 0 V3.7 Z" fill="#9aa7b0"/>
<rect x="0" y="8" width="15" height="7" fill="#a686d8"/>
<path d="M1.6 14.6 V9.4 H3.7 Q4.7 9.4 4.7 10.7 Q4.7 12 3.7 12 H1.6" fill="none" stroke="#40345a" stroke-width="1.05"/>
<path d="M6.1 9.4 V14.6 M9.1 9.4 V14.6 M6.1 12 H9.1" fill="none" stroke="#40345a" stroke-width="1.05"/>
<path d="M10.7 14.6 V9.4 H12.8 Q13.8 9.4 13.8 10.7 Q13.8 12 12.8 12 H10.7" fill="none" stroke="#40345a" stroke-width="1.05"/>
</svg>
<div class="a" style="left:1208.5px;top:27.39px;line-height:20px;font-size:13.3px;color:#c6c6c6;font-family:'Liberation Sans',sans-serif;">option.php</div>
<svg style="left:1278.5px;top:32px" width="9" height="9"><path d="M0.5 0.5 L8.5 8.5 M8.5 0.5 L0.5 8.5" stroke="#6c6f71" stroke-width="1.1"/></svg>
<svg style="left:1303px;top:29.5px" width="16" height="16"><circle cx="7.5" cy="7.5" r="7.3" fill="#3b8fb5"/><circle cx="7.5" cy="7.5" r="3.3" fill="none" stroke="#2d4f60" stroke-width="1.6"/></svg>
<div class="a" style="left:355px;top:50px;width:524px;height:28px;background:#45494a;"></div>
<div class="a" style="left:878px;top:50px;width:431px;height:28px;background:#3c3f41;"></div>
<div class="a" style="left:794px;top:52px;width:1px;height:25px;background:#2f3133;"></div>
<svg style="left:360px;top:56px" width="20" height="16"><circle cx="6.5" cy="6.7" r="5" fill="none" stroke="#8a8d8f" stroke-width="1.2"/><path d="M10 10.2 L13.2 13.4" stroke="#8a8d8f" stroke-width="1.6"/><path d="M14 7.3 H18 L16 9.5 Z" fill="#8a8d8f"/></svg>
<div class="a" style="left:385px;top:52.63px;line-height:20px;font-size:12.6px;color:#c6c6c6;font-family:'Liberation Sans',sans-serif;">idx_update_recaptcha_key</div>
<svg style="left:751px;top:60px" width="9" height="9"><path d="M0.5 0.5 L8.5 8.5 M8.5 0.5 L0.5 8.5" stroke="#6a6d6f" stroke-width="1.1"/></svg>
<svg style="left:774px;top:57px" width="14" height="14"><path d="M5 2.5 H10 Q13 2.5 13 6 Q13 9.5 10 9.5 H3 M6 6.5 L3 9.5 L6 12.5" fill="none" stroke="#6a6d6f" stroke-width="1.5"/></svg>
<div class="a" style="left:805px;top:55.67px;line-height:20px;font-size:12.5px;color:#65686a;font-family:'Liberation Sans',sans-serif;font-weight:bold">Aa</div>
<div class="a" style="left:832px;top:55.67px;line-height:20px;font-size:12.5px;color:#65686a;font-family:'Liberation Sans',sans-serif;font-weight:bold">W</div>
<div class="a" style="left:857px;top:55.15px;line-height:20px;font-size:14px;color:#65686a;font-family:'Liberation Sans',sans-serif;font-weight:bold">.*</div>
<div class="a" style="left:902px;top:55.48px;line-height:20px;font-size:11.6px;color:#c6c6c6;font-family:'Liberation Sans',sans-serif;">3 results</div>
<svg style="left:965px;top:57px" width="12" height="14"><path d="M6 13 V1.5 M1 6.5 L6 1.5 L11 6.5" fill="none" stroke="#afb1b3" stroke-width="1.7"/></svg>
<svg style="left:991px;top:57px" width="12" height="14"><path d="M6 1 V12.5 M1 7.5 L6 12.5 L11 7.5" fill="none" stroke="#afb1b3" stroke-width="1.7"/></svg>
<svg style="left:1017px;top:58px" width="13" height="13"><rect x="0.6" y="0.6" width="11" height="11" fill="none" stroke="#afb1b3" stroke-width="1.2"/><rect x="1" y="8" width="6" height="3.5" fill="#afb1b3"/></svg>
<div class="a" style="left:1039px;top:54px;width:1px;height:20px;background:#55585a;"></div>
<svg style="left:1040px;top:50px" width="80" height="28"><path d="M14 7 V17 M9 12 H19" stroke="#afb1b3" stroke-width="2.4"/><path d="M18.5 14.5 V21.5 M22.5 14.5 V21.5" stroke="#afb1b3" stroke-width="1"/><rect x="17" y="14" width="1" height="1" fill="#afb1b3"/><rect x="17" y="21.5" width="1" height="1" fill="#afb1b3"/><rect x="19" y="14" width="1" height="1" fill="#afb1b3"/><rect x="19" y="21.5" width="1" height="1" fill="#afb1b3"/><rect x="21" y="14" width="1" height="1" fill="#afb1b3"/><rect x="21" y="21.5" width="1" height="1" fill="#afb1b3"/><rect x="23" y="14" width="1" height="1" fill="#afb1b3"/><rect x="23" y="21.5" width="1" height="1" fill="#afb1b3"/></svg>
<svg style="left:1040px;top:50px" width="80" height="28"><path d="M35 12 H45.5" stroke="#afb1b3" stroke-width="2.4"/><path d="M44.5 14.5 V21.5 M48.5 14.5 V21.5" stroke="#afb1b3" stroke-width="1"/><rect x="43" y="14" width="1" height="1" fill="#afb1b3"/><rect x="43" y="21.5" width="1" height="1" fill="#afb1b3"/><rect x="45" y="14" width="1" height="1" fill="#afb1b3"/><rect x="45" y="21.5" width="1" height="1" fill="#afb1b3"/><rect x="47" y="14" width="1" height="1" fill="#afb1b3"/><rect x="47" y="21.5" width="1" height="1" fill="#afb1b3"/><rect x="49" y="14" width="1" height="1" fill="#afb1b3"/><rect x="49" y="21.5" width="1" height="1" fill="#afb1b3"/></svg>
<svg style="left:1040px;top:50px" width="80" height="28"><path d="M67.5 10 V8.5 H60.5 V15.8 H67.5 V14" fill="none" stroke="#afb1b3" stroke-width="1.3"/><path d="M62 11.5 L64.3 13.8 L69.5 8.5" fill="none" stroke="#afb1b3" stroke-width="1.6"/><path d="M70.5 14.5 V21.5 M74.5 14.5 V21.5" stroke="#afb1b3" stroke-width="1"/><rect x="69" y="14" width="1" height="1" fill="#afb1b3"/><rect x="69" y="21.5" width="1" height="1" fill="#afb1b3"/><rect x="71" y="14" width="1" height="1" fill="#afb1b3"/><rect x="71" y="21.5" width="1" height="1" fill="#afb1b3"/><rect x="73" y="14" width="1" height="1" fill="#afb1b3"/><rect x="73" y="21.5" width="1" height="1" fill="#afb1b3"/><rect x="75" y="14" width="1" height="1" fill="#afb1b3"/><rect x="75" y="21.5" width="1" height="1" fill="#afb1b3"/></svg>
<div class="a" style="left:1124px;top:54px;width:1px;height:20px;background:#55585a;"></div>
<svg style="left:1135px;top:58px" width="15" height="15"><path d="M0 2 H11 M0 6.5 H6 M0 11 H6" stroke="#afb1b3" stroke-width="1.6"/><path d="M8 6 H13 M8 13.5 H13 M10.5 6 V13.5" stroke="#afb1b3" stroke-width="1.2"/></svg>
<svg style="left:1161px;top:58px" width="17" height="16"><path d="M0 0 H12 L8 6 V12 L4.5 12 V6 Z" fill="#afb1b3"/><path d="M10.5 13 H16 L13.25 15.5 Z" fill="#dfe1e3"/></svg>
<div class="a" style="left:355px;top:78px;width:69px;height:484px;background:#313335;"></div>
<div class="a" style="left:424px;top:78px;width:885px;height:484px;background:#242626;"></div>
<div class="a" style="left:419px;top:198px;width:890px;height:21px;background:#323232;"></div>
<div class="a" style="left:419px;top:219px;width:890px;height:21px;background:#3a2324;"></div>
<div class="a" style="left:331px;width:50px;text-align:right;top:72.77px;line-height:21px;font-family:'Liberation Mono',monospace;font-size:13.6px;color:#5f6264;transform:scaleX(0.835);transform-origin:100% 50%">270</div>
<div class="a" style="left:331px;width:50px;text-align:right;top:93.77px;line-height:21px;font-family:'Liberation Mono',monospace;font-size:13.6px;color:#5f6264;transform:scaleX(0.835);transform-origin:100% 50%">271</div>
<div class="a" style="left:331px;width:50px;text-align:right;top:114.77px;line-height:21px;font-family:'Liberation Mono',monospace;font-size:13.6px;color:#5f6264;transform:scaleX(0.835);transform-origin:100% 50%">272</div>
<div class="a" style="left:331px;width:50px;text-align:right;top:135.77px;line-height:21px;font-family:'Liberation Mono',monospace;font-size:13.6px;color:#5f6264;transform:scaleX(0.835);transform-origin:100% 50%">273</div>
<div class="a" style="left:331px;width:50px;text-align:right;top:156.77px;line-height:21px;font-family:'Liberation Mono',monospace;font-size:13.6px;color:#5f6264;transform:scaleX(0.835);transform-origin:100% 50%">274</div>
<div class="a" style="left:331px;width:50px;text-align:right;top:177.77px;line-height:21px;font-family:'Liberation Mono',monospace;font-size:13.6px;color:#5f6264;transform:scaleX(0.835);transform-origin:100% 50%">275</div>
<div class="a" style="left:331px;width:50px;text-align:right;top:198.77px;line-height:21px;font-family:'Liberation Mono',monospace;font-size:13.6px;color:#a4a3a3;transform:scaleX(0.835);transform-origin:100% 50%">276</div>
<div class="a" style="left:331px;width:50px;text-align:right;top:219.77px;line-height:21px;font-family:'Liberation Mono',monospace;font-size:13.6px;color:#5f6264;transform:scaleX(0.835);transform-origin:100% 50%">277</div>
<div class="a" style="left:331px;width:50px;text-align:right;top:240.77px;line-height:21px;font-family:'Liberation Mono',monospace;font-size:13.6px;color:#5f6264;transform:scaleX(0.835);transform-origin:100% 50%">278</div>
<div class="a" style="left:331px;width:50px;text-align:right;top:261.77px;line-height:21px;font-family:'Liberation Mono',monospace;font-size:13.6px;color:#5f6264;transform:scaleX(0.835);transform-origin:100% 50%">279</div>
<div class="a" style="left:331px;width:50px;text-align:right;top:282.77px;line-height:21px;font-family:'Liberation Mono',monospace;font-size:13.6px;color:#5f6264;transform:scaleX(0.835);transform-origin:100% 50%">280</div>
<div class="a" style="left:331px;width:50px;text-align:right;top:303.77px;line-height:21px;font-family:'Liberation Mono',monospace;font-size:13.6px;color:#5f6264;transform:scaleX(0.835);transform-origin:100% 50%">281</div>
<div class="a" style="left:331px;width:50px;text-align:right;top:324.77px;line-height:21px;font-family:'Liberation Mono',monospace;font-size:13.6px;color:#5f6264;transform:scaleX(0.835);transform-origin:100% 50%">282</div>
<div class="a" style="left:331px;width:50px;text-align:right;top:345.77px;line-height:21px;font-family:'Liberation Mono',monospace;font-size:13.6px;color:#5f6264;transform:scaleX(0.835);transform-origin:100% 50%">283</div>
<div class="a" style="left:331px;width:50px;text-align:right;top:366.77px;line-height:21px;font-family:'Liberation Mono',monospace;font-size:13.6px;color:#5f6264;transform:scaleX(0.835);transform-origin:100% 50%">284</div>
<div class="a" style="left:331px;width:50px;text-align:right;top:387.77px;line-height:21px;font-family:'Liberation Mono',monospace;font-size:13.6px;color:#5f6264;transform:scaleX(0.835);transform-origin:100% 50%">285</div>
<div class="a" style="left:331px;width:50px;text-align:right;top:408.77px;line-height:21px;font-family:'Liberation Mono',monospace;font-size:13.6px;color:#5f6264;transform:scaleX(0.835);transform-origin:100% 50%">286</div>
<div class="a" style="left:331px;width:50px;text-align:right;top:429.77px;line-height:21px;font-family:'Liberation Mono',monospace;font-size:13.6px;color:#5f6264;transform:scaleX(0.835);transform-origin:100% 50%">287</div>
<div class="a" style="left:331px;width:50px;text-align:right;top:450.77px;line-height:21px;font-family:'Liberation Mono',monospace;font-size:13.6px;color:#5f6264;transform:scaleX(0.835);transform-origin:100% 50%">288</div>
<div class="a" style="left:331px;width:50px;text-align:right;top:471.77px;line-height:21px;font-family:'Liberation Mono',monospace;font-size:13.6px;color:#5f6264;transform:scaleX(0.835);transform-origin:100% 50%">289</div>
<div class="a" style="left:331px;width:50px;text-align:right;top:492.77px;line-height:21px;font-family:'Liberation Mono',monospace;font-size:13.6px;color:#5f6264;transform:scaleX(0.835);transform-origin:100% 50%">290</div>
<div class="a" style="left:331px;width:50px;text-align:right;top:513.77px;line-height:21px;font-family:'Liberation Mono',monospace;font-size:13.6px;color:#5f6264;transform:scaleX(0.835);transform-origin:100% 50%">291</div>
<div class="a" style="left:331px;width:50px;text-align:right;top:534.77px;line-height:21px;font-family:'Liberation Mono',monospace;font-size:13.6px;color:#5f6264;transform:scaleX(0.835);transform-origin:100% 50%">292</div>
<div class="a" style="left:331px;width:50px;text-align:right;top:555.77px;line-height:21px;font-family:'Liberation Mono',monospace;font-size:13.6px;color:#5f6264;transform:scaleX(0.835);transform-origin:100% 50%">293</div>
<div class="a" style="left:418px;top:78px;width:1px;height:484px;background:#555759;"></div>
<svg style="left:414px;top:120.5px" width="10" height="12"><path d="M0.5 0.5 H8.5 V7.5 L4.5 10.5 L0.5 7.5 Z" fill="#313335" stroke="#5f6163"/><path d="M2.5 4.5 H6.5" stroke="#6f7173" stroke-width="1.2"/></svg>
<svg style="left:414px;top:225.5px" width="10" height="12"><path d="M0.5 0.5 H8.5 V7.5 L4.5 10.5 L0.5 7.5 Z" fill="#313335" stroke="#5f6163"/><path d="M2.5 4.5 H6.5" stroke="#6f7173" stroke-width="1.2"/></svg>
<svg style="left:414px;top:246.5px" width="10" height="12"><path d="M0.5 0.5 H8.5 V7.5 L4.5 10.5 L0.5 7.5 Z" fill="#313335" stroke="#5f6163"/><path d="M2.5 4.5 H6.5" stroke="#6f7173" stroke-width="1.2"/></svg>
<svg style="left:414px;top:456.5px" width="10" height="12"><path d="M0.5 0.5 H8.5 V7.5 L4.5 10.5 L0.5 7.5 Z" fill="#313335" stroke="#5f6163"/><path d="M2.5 4.5 H6.5" stroke="#6f7173" stroke-width="1.2"/></svg>
<svg style="left:414px;top:76.5px" width="10" height="12"><path d="M0.5 3.5 L4.5 0.5 L8.5 3.5 V10.5 H0.5 Z" fill="#313335" stroke="#5f6163"/><path d="M2.5 6.5 H6.5" stroke="#6f7173" stroke-width="1.2"/></svg>
<svg style="left:414px;top:202.5px" width="10" height="12"><path d="M0.5 3.5 L4.5 0.5 L8.5 3.5 V10.5 H0.5 Z" fill="#313335" stroke="#5f6163"/><path d="M2.5 6.5 H6.5" stroke="#6f7173" stroke-width="1.2"/></svg>
<svg style="left:414px;top:307.5px" width="10" height="12"><path d="M0.5 3.5 L4.5 0.5 L8.5 3.5 V10.5 H0.5 Z" fill="#313335" stroke="#5f6163"/><path d="M2.5 6.5 H6.5" stroke="#6f7173" stroke-width="1.2"/></svg>
<svg style="left:414px;top:370.5px" width="10" height="12"><path d="M0.5 3.5 L4.5 0.5 L8.5 3.5 V10.5 H0.5 Z" fill="#313335" stroke="#5f6163"/><path d="M2.5 6.5 H6.5" stroke="#6f7173" stroke-width="1.2"/></svg>
<svg style="left:414px;top:412.5px" width="10" height="12"><path d="M0.5 3.5 L4.5 0.5 L8.5 3.5 V10.5 H0.5 Z" fill="#313335" stroke="#5f6163"/><path d="M2.5 6.5 H6.5" stroke="#6f7173" stroke-width="1.2"/></svg>
<svg style="left:414px;top:559.5px" width="10" height="12"><path d="M0.5 3.5 L4.5 0.5 L8.5 3.5 V10.5 H0.5 Z" fill="#313335" stroke="#5f6163"/><path d="M2.5 6.5 H6.5" stroke="#6f7173" stroke-width="1.2"/></svg>
<div class="a" style="left:400px;top:70px;width:24px;height:8px;background:#45494a;"></div>
<svg style="left:390px;top:222px" width="14" height="14"><path d="M7 0.5 L13.5 7 L7 13.5 L0.5 7 Z" fill="#c75450"/></svg>
<div class="a" style="left:458px;top:241px;width:1px;height:167px;background:#393b3b;"></div>
<div class="a" style="left:490px;top:261px;width:1px;height:41px;background:#393b3b;"></div>
<div class="a" style="left:490px;top:324px;width:1px;height:42px;background:#393b3b;"></div>
<div class="a" style="left:425px;top:554px;width:513px;height:8px;background:#4a4d4f;"></div>
<div class="a" style="left:584px;top:219px;width:193px;height:21px;background:#32593d;border:1px solid #c8c8c8"></div>
<div class="a" style="left:424px;top:78px;width:885px;height:484px;overflow:hidden">
<div class="cl" style="top:-5.23px">    }</div>
<div class="cl" style="top:36.77px"><span class="c">    /<span class="ast">*</span><span class="ast">*</span></span></div>
<div class="cl" style="top:57.77px"><span class="c">     <span class="ast">*</span> Function to update recaptcha key on admin settings page</span></div>
<div class="cl" style="top:78.77px"><span class="c">     <span class="ast">*</span></span></div>
<div class="cl" style="top:99.77px"><span class="c">     <span class="ast">*</span> </span><span class="c tg">@return</span><span class="c"> </span><span class="vd">void</span></div>
<div class="cl" style="top:120.77px"><span class="c">     <span class="ast">*</span>/</span></div>
<div class="cl" style="top:141.77px"><span class="k">    public function </span><span class="hl">idx_update_recaptcha_key</span>() {</div>
<div class="cl" style="top:162.77px"><span class="k">        if</span> ( <span class="v">$_POST</span>[<span class="s">&#x27;idx_recaptcha_site_key&#x27;</span>] ) {</div>
<div class="cl" style="top:183.77px">            update_option( <span class="hint" style="width:55px"><span class="hb"></span><span class="ht">option:</span></span><span class="s">&#x27;idx_recaptcha_site_key&#x27;</span><span class="k">,</span> <span class="v">$_POST</span>[<span class="s">&#x27;idx_recaptcha_site_key&#x27;</span>]<span class="k">,</span> <span class="hint" style="width:69px"><span class="hb"></span><span class="ht">autoload:</span></span><span class="k">false</span> )<span class="k">;</span></div>
<div class="cl" style="top:204.77px"><span class="k">            echo </span><span class="n">1</span><span class="k">;</span></div>
<div class="cl" style="top:225.77px">        } <span class="k">else</span> {</div>
<div class="cl" style="top:246.77px">            delete_option( <span class="hint" style="width:55px"><span class="hb"></span><span class="ht">option:</span></span><span class="s">&#x27;idx_recaptcha_site_key&#x27;</span> )<span class="k">;</span></div>
<div class="cl" style="top:267.77px"><span class="k">            echo </span><span class="s">&#x27;error&#x27;</span><span class="k">;</span></div>
<div class="cl" style="top:288.77px">        }</div>
<div class="cl" style="top:309.77px"><span class="k">        die</span>()<span class="k">;</span></div>
<div class="cl" style="top:330.77px">    }</div>
<div class="cl" style="top:372.77px"><span class="c">    /<span class="ast">*</span><span class="ast">*</span></span></div>
<div class="cl" style="top:393.77px"><span class="c">     <span class="ast">*</span> load_admin_menu_styles function.</span></div>
<div class="cl" style="top:414.77px"><span class="c">     <span class="ast">*</span></span></div>
<div class="cl" style="top:435.77px"><span class="c">     <span class="ast">*</span> </span><span class="c tg">@access</span><span class="c"> public</span></div>
<div class="cl" style="top:456.77px"><span class="c">     <span class="ast">*</span> </span><span class="c tg">@return</span><span class="c"> </span><span class="vd">void</span></div>
<div class="cl" style="top:477.77px"><span class="c">     <span class="ast">*</span>/</span></div>
</div>
<div class="a" style="left:915px;top:202px;width:1px;height:1px;background:#ff0000;"></div>
<div class="a" style="left:450.5px;top:212.5px;width:383px;height:31px;border:3px solid #ff0000"></div>
<div class="a" style="left:355px;top:562px;width:954px;height:19px;background:#313335;"></div>
<div class="a" style="left:355px;top:562px;width:954px;height:1px;background:#2b2d2e;"></div>
<div class="a" style="left:428px;top:565.75px;line-height:20px;font-size:13.7px;color:#c6c6c6;font-family:'Liberation Sans',sans-serif;">\IDX</div>
<svg style="left:466px;top:572px" width="5" height="8"><path d="M0.5 0.5 L3.7 3.8 L0.5 7.2" fill="none" stroke="#6a6d6f"/></svg>
<div class="a" style="left:478.5px;top:565.96px;line-height:20px;font-size:13.1px;color:#c6c6c6;font-family:'Liberation Sans',sans-serif;">Initiate Plugin</div>
<svg style="left:0px;top:0px" width="1309" height="581" viewBox="0 0 1309 581">
<g fill="rgba(255,255,255,0.17)">
<path d="M1081 535.2 H1106.2 L1081 576.7 Z"/>
<path d="M1121.2 527.1 V568.8 H1095.7 Z"/>
</g>
<g fill="none" stroke="rgba(255,255,255,0.18)" stroke-width="3" stroke-linecap="butt">
<path d="M1144.2 535.3 L1137.7 547.4 M1142.9 541.8 H1168.7 M1153.7 534 V552.5 M1134.7 552.5 H1170.9 M1147.2 552.5 Q1146.5 565 1135.2 568.9 M1158 552.5 V565.5 Q1158 567.2 1160 567.2 H1168.3 Q1169.6 567.2 1169.6 565.6 V559.4"/>
<path d="M1179.5 534.5 L1174.7 545.7 M1176.9 540 H1191.1 M1173.9 552.5 H1192 M1183 540 V552.5 Q1182 563 1175.2 568.9 M1185 557.7 L1191 565.4 M1195 539.3 H1207.3 V566.6 H1195 Z"/>
<path d="M1221.2 534.5 L1224.2 540 M1215.6 543 H1227.2 L1215.6 558.1 M1222.5 550.8 V569.8 M1226.4 553 L1230.2 557.7 M1240.1 533.6 V567.6 M1230.2 546.5 H1250.9 M1228 567.6 H1252.2"/>
<path d="M1289.2 537.5 H1258.2 V566.7 H1289.6 M1264.6 542.2 L1285.3 562 M1284 541.8 L1263.8 561.6"/>
</g></svg>
</body></html>
